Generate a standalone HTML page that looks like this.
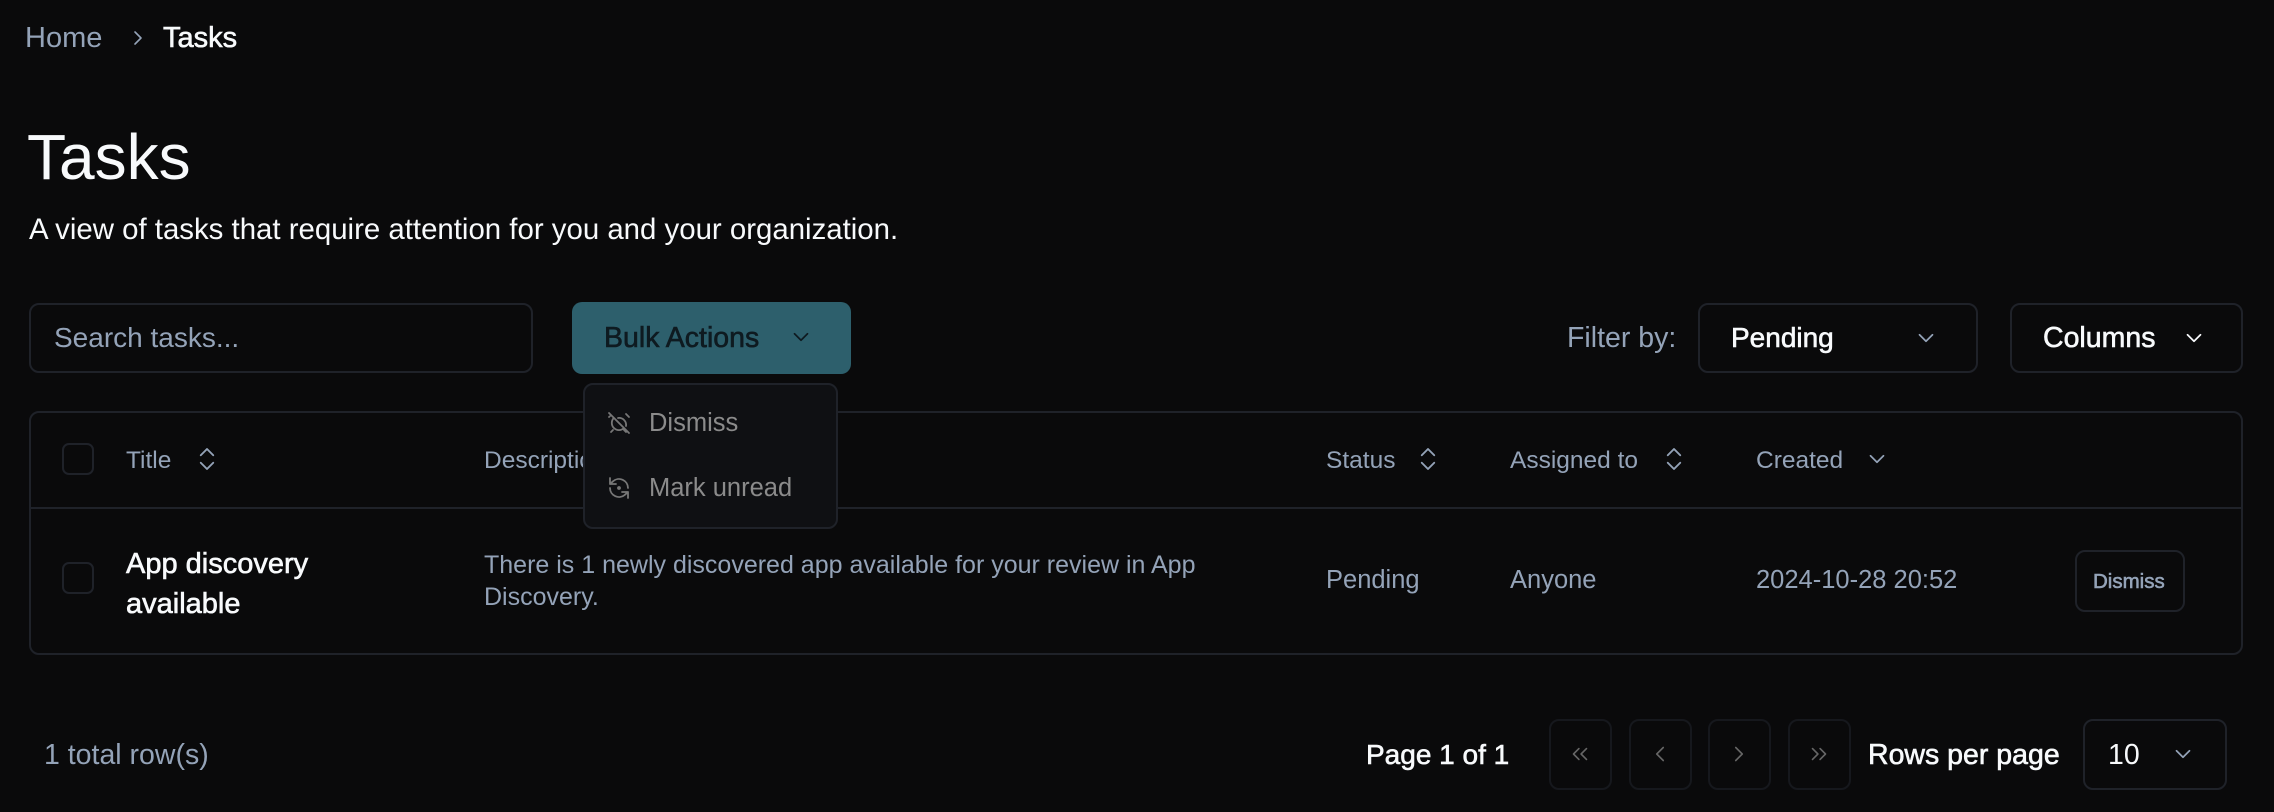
<!DOCTYPE html>
<html><head><meta charset="utf-8"><style>
*{box-sizing:border-box;margin:0;padding:0}
body{width:2274px;height:812px;background:#0a0a0b;font-family:"Liberation Sans",sans-serif;color:#f8fafc;position:relative;overflow:hidden}
.a{position:absolute;white-space:nowrap}
.m{color:#94a3b8}
.md{-webkit-text-stroke:0.6px currentColor}
.box{position:absolute;border:2px solid #1f2229;border-radius:10px}
svg{position:absolute;fill:none;stroke-linecap:round;stroke-linejoin:round}
</style></head><body>
<div class="a m" style="left:25px;top:22px;font-size:29px">Home</div>
<svg style="left:126px;top:26px" width="24" height="24" viewBox="0 0 24 24" stroke="#94a3b8" stroke-width="1.6"><path d="M9 6l6 6-6 6"/></svg>
<div class="a md" style="left:163px;top:22px;font-size:29px">Tasks</div>
<div class="a" style="left:27px;top:120px;font-size:64px">Tasks</div>
<div class="a" style="left:29px;top:213px;font-size:29.4px">A view of tasks that require attention for you and your organization.</div>

<div class="box" style="left:29px;top:303px;width:504px;height:70px"></div>
<div class="a m" style="left:54px;top:322px;font-size:28px">Search tasks...</div>
<div class="a" style="left:572px;top:302px;width:279px;height:72px;background:#2d5f6c;border-radius:10px"></div>
<div class="a md" style="left:604px;top:322px;font-size:28.5px;color:#0e1a20">Bulk Actions</div>
<svg style="left:788px;top:324px" width="26" height="26" viewBox="0 0 24 24" stroke="#0e1a20" stroke-width="1.6"><path d="M6 9l6 6 6-6"/></svg>

<div class="a m" style="left:1567px;top:322px;font-size:28.5px">Filter by:</div>
<div class="box" style="left:1698px;top:303px;width:280px;height:70px"></div>
<div class="a md" style="left:1731px;top:322px;font-size:28px">Pending</div>
<svg style="left:1913px;top:325px" width="26" height="26" viewBox="0 0 24 24" stroke="#94a3b8" stroke-width="1.6"><path d="M6 9l6 6 6-6"/></svg>
<div class="box" style="left:2010px;top:303px;width:233px;height:70px"></div>
<div class="a md" style="left:2043px;top:322px;font-size:28.5px">Columns</div>
<svg style="left:2181px;top:325px" width="26" height="26" viewBox="0 0 24 24" stroke="#f8fafc" stroke-width="1.6"><path d="M6 9l6 6 6-6"/></svg>

<div class="box" style="left:29px;top:411px;width:2214px;height:244px"></div>
<div class="a" style="left:31px;top:507px;width:2210px;height:2px;background:#1f2229"></div>
<div class="box" style="left:62px;top:443px;width:32px;height:32px;border-radius:7px"></div>
<div class="box" style="left:62px;top:562px;width:32px;height:32px;border-radius:7px"></div>
<div class="a m" style="left:126px;top:447px;font-size:24.5px">Title</div>
<svg style="left:192px;top:443px" width="30" height="32" viewBox="0 0 24 24" stroke="#94a3b8" stroke-width="1.5"><path d="M7 9l5-5 5 5M7 15l5 5 5-5"/></svg>
<div class="a m" style="left:484px;top:447px;font-size:24.5px">Description</div>
<div class="a m" style="left:1326px;top:447px;font-size:24.5px">Status</div>
<svg style="left:1413px;top:443px" width="30" height="32" viewBox="0 0 24 24" stroke="#94a3b8" stroke-width="1.5"><path d="M7 9l5-5 5 5M7 15l5 5 5-5"/></svg>
<div class="a m" style="left:1510px;top:447px;font-size:24.5px">Assigned to</div>
<svg style="left:1659px;top:443px" width="30" height="32" viewBox="0 0 24 24" stroke="#94a3b8" stroke-width="1.5"><path d="M7 9l5-5 5 5M7 15l5 5 5-5"/></svg>
<div class="a m" style="left:1756px;top:447px;font-size:24.5px">Created</div>
<svg style="left:1864px;top:446px" width="26" height="26" viewBox="0 0 24 24" stroke="#94a3b8" stroke-width="1.6"><path d="M6 9l6 6 6-6"/></svg>

<div class="a md" style="left:126px;top:544px;font-size:29px;line-height:40px">App discovery<br>available</div>
<div class="a m" style="left:484px;top:549px;font-size:25px;line-height:32px">There is 1 newly discovered app available for your review in App<br>Discovery.</div>
<div class="a m" style="left:1326px;top:566px;font-size:25.5px">Pending</div>
<div class="a m" style="left:1510px;top:566px;font-size:25.5px">Anyone</div>
<div class="a m" style="left:1756px;top:566px;font-size:25.5px">2024-10-28 20:52</div>
<div class="box" style="left:2075px;top:550px;width:110px;height:62px"></div>
<div class="a m md" style="left:2093px;top:570px;font-size:20.5px">Dismiss</div>

<div class="a" style="left:583px;top:383px;width:255px;height:146px;background:#0f1013;border:2px solid #1f2229;border-radius:10px"></div>
<svg style="left:607px;top:411px" width="24" height="24" viewBox="0 0 24 24" stroke="#777" stroke-width="1.8"><path d="M6.9 6.9A7 7 0 0 0 17 17M19 15a7 7 0 0 0-8-8M2 2l20 20M4 4L2 6M22 6l-3-3M6 19l-2 2M17 19l2 2"/></svg>
<div class="a" style="left:649px;top:409px;font-size:25.5px;color:#8b8b8b">Dismiss</div>
<svg style="left:607px;top:476px" width="24" height="24" viewBox="0 0 24 24" stroke="#777" stroke-width="1.8"><path d="M3 2v6h6M21 12A9 9 0 0 0 6 5.3L3 8M21 22v-6h-6M3 12a9 9 0 0 0 15 6.7l3-2.7"/><circle cx="12" cy="12" r="1"/></svg>
<div class="a" style="left:649px;top:474px;font-size:25.5px;color:#8b8b8b">Mark unread</div>

<div class="a m" style="left:44px;top:739px;font-size:28.5px">1 total row(s)</div>
<div class="a md" style="left:1366px;top:739px;font-size:28px">Page 1 of 1</div>
<div class="box" style="left:1549px;top:719px;width:63px;height:71px;border-color:#16181d"></div>
<div class="box" style="left:1629px;top:719px;width:63px;height:71px;border-color:#16181d"></div>
<div class="box" style="left:1708px;top:719px;width:63px;height:71px;border-color:#16181d"></div>
<div class="box" style="left:1788px;top:719px;width:63px;height:71px;border-color:#16181d"></div>
<svg style="left:1567px;top:741px" width="26" height="26" viewBox="0 0 24 24" stroke="#666" stroke-width="1.5"><path d="M11 17l-5-5 5-5M18 17l-5-5 5-5"/></svg>
<svg style="left:1647px;top:741px" width="26" height="26" viewBox="0 0 24 24" stroke="#666" stroke-width="1.5"><path d="M15 18l-6-6 6-6"/></svg>
<svg style="left:1726px;top:741px" width="26" height="26" viewBox="0 0 24 24" stroke="#666" stroke-width="1.5"><path d="M9 18l6-6-6-6"/></svg>
<svg style="left:1806px;top:741px" width="26" height="26" viewBox="0 0 24 24" stroke="#666" stroke-width="1.5"><path d="M6 17l5-5-5-5M13 17l5-5-5-5"/></svg>
<div class="a md" style="left:1868px;top:739px;font-size:28.5px">Rows per page</div>
<div class="box" style="left:2083px;top:719px;width:144px;height:71px"></div>
<div class="a" style="left:2108px;top:739px;font-size:28.5px">10</div>
<svg style="left:2170px;top:741px" width="26" height="26" viewBox="0 0 24 24" stroke="#94a3b8" stroke-width="1.6"><path d="M6 9l6 6 6-6"/></svg>
</body></html>
